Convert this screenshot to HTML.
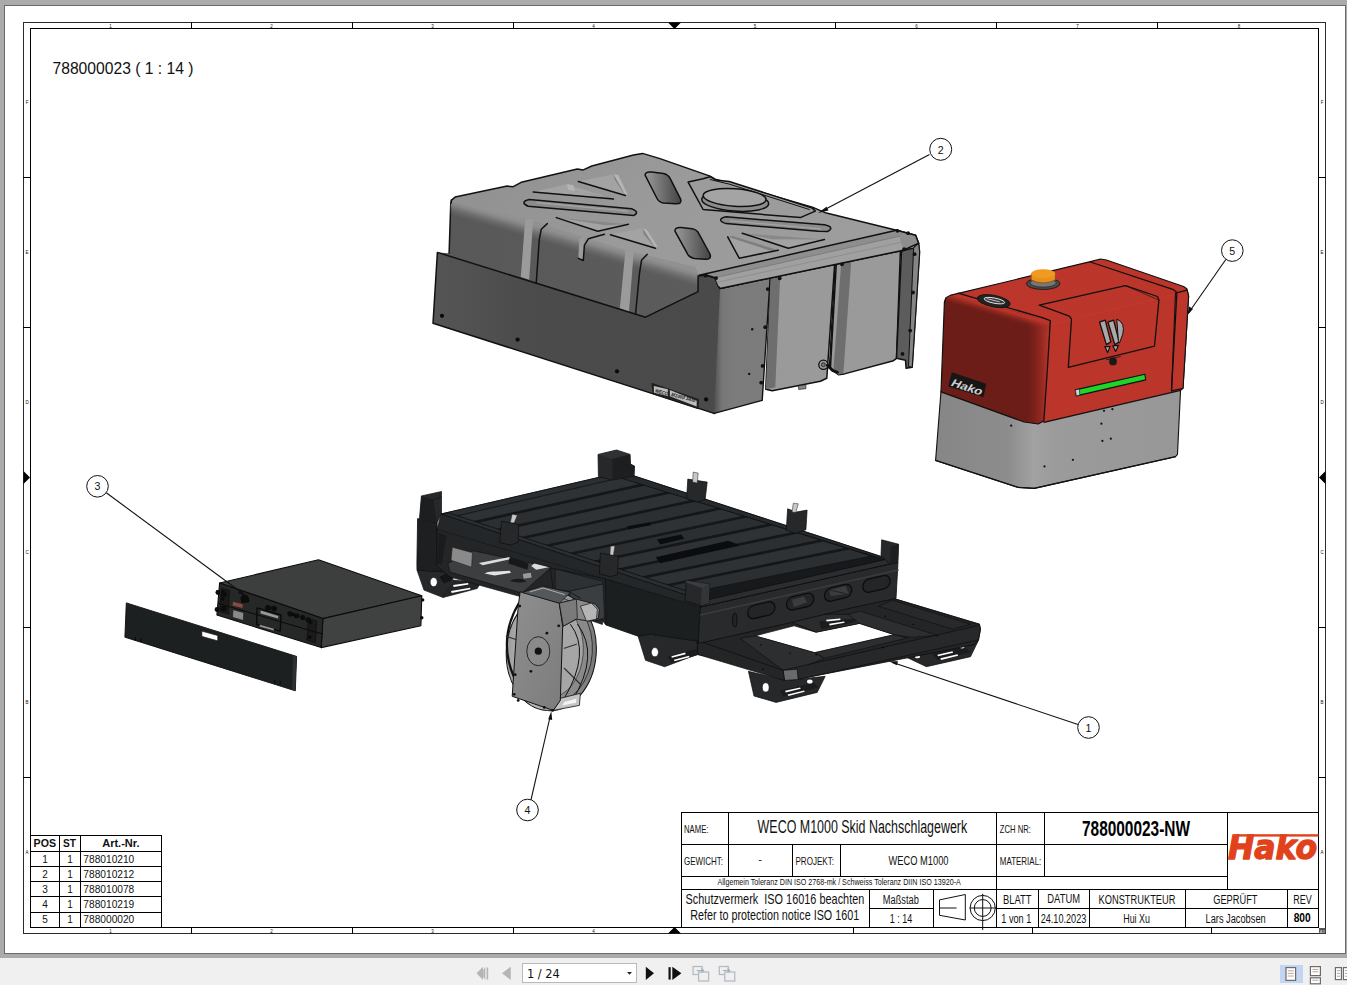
<!DOCTYPE html>
<html lang="de"><head><meta charset="utf-8"><title>788000023-NW</title>
<style>
html,body{margin:0;padding:0;background:#ababab;overflow:hidden}
body{width:1347px;height:985px;position:relative;font-family:"Liberation Sans",sans-serif}
svg{position:absolute;left:0;top:0;display:block}
text{white-space:pre}
</style></head><body>
<svg width="1347" height="985" viewBox="0 0 1347 985">
<rect x="0" y="0" width="1347" height="985" fill="#ababab"/>
<rect x="4.5" y="5.5" width="1341" height="948" fill="#fff" stroke="#6a6a6a" stroke-width="1" shape-rendering="crispEdges"/>
<g shape-rendering="crispEdges">
<rect x="23.5" y="22.5" width="1302" height="911" fill="none" stroke="#2a2a2a" stroke-width="1"/>
<rect x="30.5" y="28.5" width="1288" height="899" fill="none" stroke="#000" stroke-width="1"/>
<line x1="191.5" y1="22" x2="191.5" y2="29" stroke="#000" stroke-width="1" />
<line x1="352.5" y1="22" x2="352.5" y2="29" stroke="#000" stroke-width="1" />
<line x1="513.5" y1="22" x2="513.5" y2="29" stroke="#000" stroke-width="1" />
<line x1="835.5" y1="22" x2="835.5" y2="29" stroke="#000" stroke-width="1" />
<line x1="996.5" y1="22" x2="996.5" y2="29" stroke="#000" stroke-width="1" />
<line x1="1157.5" y1="22" x2="1157.5" y2="29" stroke="#000" stroke-width="1" />
<line x1="191.5" y1="927" x2="191.5" y2="934" stroke="#000" stroke-width="1" />
<line x1="352.5" y1="927" x2="352.5" y2="934" stroke="#000" stroke-width="1" />
<line x1="513.5" y1="927" x2="513.5" y2="934" stroke="#000" stroke-width="1" />
<line x1="853.5" y1="927" x2="853.5" y2="934" stroke="#000" stroke-width="1" />
<line x1="1032.5" y1="927" x2="1032.5" y2="934" stroke="#000" stroke-width="1" />
<line x1="1211.5" y1="927" x2="1211.5" y2="934" stroke="#000" stroke-width="1" />
<line x1="23" y1="177.5" x2="31" y2="177.5" stroke="#000" stroke-width="1" />
<line x1="1318" y1="177.5" x2="1326" y2="177.5" stroke="#000" stroke-width="1" />
<line x1="23" y1="327.5" x2="31" y2="327.5" stroke="#000" stroke-width="1" />
<line x1="1318" y1="327.5" x2="1326" y2="327.5" stroke="#000" stroke-width="1" />
<line x1="23" y1="627.5" x2="31" y2="627.5" stroke="#000" stroke-width="1" />
<line x1="1318" y1="627.5" x2="1326" y2="627.5" stroke="#000" stroke-width="1" />
<line x1="23" y1="777.5" x2="31" y2="777.5" stroke="#000" stroke-width="1" />
<line x1="1318" y1="777.5" x2="1326" y2="777.5" stroke="#000" stroke-width="1" />
</g>
<polygon points="668,22.5 681,22.5 674.5,29" fill="#000"/>
<polygon points="668,933.5 681,933.5 674.5,927" fill="#000"/>
<polygon points="23.5,471 23.5,484 30,477.5" fill="#000"/>
<polygon points="1325.5,471 1325.5,484 1319,477.5" fill="#000"/>
<text x="110.5" y="27.6" font-size="4.5" text-anchor="middle" font-weight="normal" fill="#111" font-family="'Liberation Sans', sans-serif" >1</text>
<text x="271.5" y="27.6" font-size="4.5" text-anchor="middle" font-weight="normal" fill="#111" font-family="'Liberation Sans', sans-serif" >2</text>
<text x="432.5" y="27.6" font-size="4.5" text-anchor="middle" font-weight="normal" fill="#111" font-family="'Liberation Sans', sans-serif" >3</text>
<text x="593.5" y="27.6" font-size="4.5" text-anchor="middle" font-weight="normal" fill="#111" font-family="'Liberation Sans', sans-serif" >4</text>
<text x="755" y="27.6" font-size="4.5" text-anchor="middle" font-weight="normal" fill="#111" font-family="'Liberation Sans', sans-serif" >5</text>
<text x="916.5" y="27.6" font-size="4.5" text-anchor="middle" font-weight="normal" fill="#111" font-family="'Liberation Sans', sans-serif" >6</text>
<text x="1077.5" y="27.6" font-size="4.5" text-anchor="middle" font-weight="normal" fill="#111" font-family="'Liberation Sans', sans-serif" >7</text>
<text x="1239" y="27.6" font-size="4.5" text-anchor="middle" font-weight="normal" fill="#111" font-family="'Liberation Sans', sans-serif" >8</text>
<text x="110.5" y="933.2" font-size="4.5" text-anchor="middle" font-weight="normal" fill="#111" font-family="'Liberation Sans', sans-serif" >1</text>
<text x="271.5" y="933.2" font-size="4.5" text-anchor="middle" font-weight="normal" fill="#111" font-family="'Liberation Sans', sans-serif" >2</text>
<text x="432.5" y="933.2" font-size="4.5" text-anchor="middle" font-weight="normal" fill="#111" font-family="'Liberation Sans', sans-serif" >3</text>
<text x="593.5" y="933.2" font-size="4.5" text-anchor="middle" font-weight="normal" fill="#111" font-family="'Liberation Sans', sans-serif" >4</text>
<text x="27" y="104" font-size="4.5" text-anchor="middle" font-weight="normal" fill="#111" font-family="'Liberation Sans', sans-serif" >F</text>
<text x="1322" y="104" font-size="4.5" text-anchor="middle" font-weight="normal" fill="#111" font-family="'Liberation Sans', sans-serif" >F</text>
<text x="27" y="254" font-size="4.5" text-anchor="middle" font-weight="normal" fill="#111" font-family="'Liberation Sans', sans-serif" >E</text>
<text x="1322" y="254" font-size="4.5" text-anchor="middle" font-weight="normal" fill="#111" font-family="'Liberation Sans', sans-serif" >E</text>
<text x="27" y="404" font-size="4.5" text-anchor="middle" font-weight="normal" fill="#111" font-family="'Liberation Sans', sans-serif" >D</text>
<text x="1322" y="404" font-size="4.5" text-anchor="middle" font-weight="normal" fill="#111" font-family="'Liberation Sans', sans-serif" >D</text>
<text x="27" y="554" font-size="4.5" text-anchor="middle" font-weight="normal" fill="#111" font-family="'Liberation Sans', sans-serif" >C</text>
<text x="1322" y="554" font-size="4.5" text-anchor="middle" font-weight="normal" fill="#111" font-family="'Liberation Sans', sans-serif" >C</text>
<text x="27" y="704" font-size="4.5" text-anchor="middle" font-weight="normal" fill="#111" font-family="'Liberation Sans', sans-serif" >B</text>
<text x="1322" y="704" font-size="4.5" text-anchor="middle" font-weight="normal" fill="#111" font-family="'Liberation Sans', sans-serif" >B</text>
<text x="27" y="854" font-size="4.5" text-anchor="middle" font-weight="normal" fill="#111" font-family="'Liberation Sans', sans-serif" >A</text>
<text x="1322" y="854" font-size="4.5" text-anchor="middle" font-weight="normal" fill="#111" font-family="'Liberation Sans', sans-serif" >A</text>
<rect x="1319" y="928" width="6.5" height="5.5" fill="#555"/>
<text x="1322.2" y="932.6" font-size="4" text-anchor="middle" font-weight="normal" fill="#ddd" font-family="'Liberation Sans', sans-serif" >A3</text>
<text x="52.5" y="74.2" font-size="16" text-anchor="start" font-weight="normal" fill="#111" font-family="'Liberation Sans', sans-serif" textLength="141" lengthAdjust="spacingAndGlyphs" >788000023 ( 1 : 14 )</text>
<g shape-rendering="crispEdges" stroke="#000" stroke-width="1" fill="none">
<rect x="30.5" y="835.5" width="131" height="92"/>
<line x1="30" y1="851.5" x2="162" y2="851.5"/>
<line x1="30" y1="866.5" x2="162" y2="866.5"/>
<line x1="30" y1="881.5" x2="162" y2="881.5"/>
<line x1="30" y1="896.5" x2="162" y2="896.5"/>
<line x1="30" y1="912.5" x2="162" y2="912.5"/>
<line x1="59.5" y1="835" x2="59.5" y2="927"/>
<line x1="80.5" y1="835" x2="80.5" y2="927"/>
</g>
<text x="33.6" y="847.2" font-size="11.5" text-anchor="start" font-weight="bold" fill="#111" font-family="'Liberation Sans', sans-serif" textLength="22.4" lengthAdjust="spacingAndGlyphs" >POS</text>
<text x="63" y="847.2" font-size="11.5" text-anchor="start" font-weight="bold" fill="#111" font-family="'Liberation Sans', sans-serif" textLength="13" lengthAdjust="spacingAndGlyphs" >ST</text>
<text x="102.2" y="847.2" font-size="11.5" text-anchor="start" font-weight="bold" fill="#111" font-family="'Liberation Sans', sans-serif" textLength="37.4" lengthAdjust="spacingAndGlyphs" >Art.-Nr.</text>
<text x="45" y="863" font-size="10" text-anchor="middle" font-weight="normal" fill="#111" font-family="'Liberation Sans', sans-serif" >1</text>
<text x="70" y="863" font-size="10" text-anchor="middle" font-weight="normal" fill="#111" font-family="'Liberation Sans', sans-serif" >1</text>
<text x="83.3" y="863" font-size="10" text-anchor="start" font-weight="normal" fill="#111" font-family="'Liberation Sans', sans-serif" textLength="51" lengthAdjust="spacingAndGlyphs" >788010210</text>
<text x="45" y="878" font-size="10" text-anchor="middle" font-weight="normal" fill="#111" font-family="'Liberation Sans', sans-serif" >2</text>
<text x="70" y="878" font-size="10" text-anchor="middle" font-weight="normal" fill="#111" font-family="'Liberation Sans', sans-serif" >1</text>
<text x="83.3" y="878" font-size="10" text-anchor="start" font-weight="normal" fill="#111" font-family="'Liberation Sans', sans-serif" textLength="51" lengthAdjust="spacingAndGlyphs" >788010212</text>
<text x="45" y="893" font-size="10" text-anchor="middle" font-weight="normal" fill="#111" font-family="'Liberation Sans', sans-serif" >3</text>
<text x="70" y="893" font-size="10" text-anchor="middle" font-weight="normal" fill="#111" font-family="'Liberation Sans', sans-serif" >1</text>
<text x="83.3" y="893" font-size="10" text-anchor="start" font-weight="normal" fill="#111" font-family="'Liberation Sans', sans-serif" textLength="51" lengthAdjust="spacingAndGlyphs" >788010078</text>
<text x="45" y="908.2" font-size="10" text-anchor="middle" font-weight="normal" fill="#111" font-family="'Liberation Sans', sans-serif" >4</text>
<text x="70" y="908.2" font-size="10" text-anchor="middle" font-weight="normal" fill="#111" font-family="'Liberation Sans', sans-serif" >1</text>
<text x="83.3" y="908.2" font-size="10" text-anchor="start" font-weight="normal" fill="#111" font-family="'Liberation Sans', sans-serif" textLength="51" lengthAdjust="spacingAndGlyphs" >788010219</text>
<text x="45" y="923.2" font-size="10" text-anchor="middle" font-weight="normal" fill="#111" font-family="'Liberation Sans', sans-serif" >5</text>
<text x="70" y="923.2" font-size="10" text-anchor="middle" font-weight="normal" fill="#111" font-family="'Liberation Sans', sans-serif" >1</text>
<text x="83.3" y="923.2" font-size="10" text-anchor="start" font-weight="normal" fill="#111" font-family="'Liberation Sans', sans-serif" textLength="51" lengthAdjust="spacingAndGlyphs" >788000020</text>
<g shape-rendering="crispEdges" stroke="#000" stroke-width="1" fill="none">
<rect x="681.5" y="812.5" width="637" height="115" fill="#fff"/>
<line x1="681" y1="844.5" x2="1227" y2="844.5"/>
<line x1="681" y1="876.5" x2="1227" y2="876.5"/>
<line x1="681" y1="889.5" x2="1319" y2="889.5"/>
<line x1="728.5" y1="812" x2="728.5" y2="877"/>
<line x1="792.5" y1="844" x2="792.5" y2="877"/>
<line x1="840.5" y1="844" x2="840.5" y2="877"/>
<line x1="996.5" y1="812" x2="996.5" y2="927"/>
<line x1="1044.5" y1="812" x2="1044.5" y2="877"/>
<line x1="1227.5" y1="812" x2="1227.5" y2="890"/>
<line x1="869.5" y1="889" x2="869.5" y2="927"/>
<line x1="933.5" y1="889" x2="933.5" y2="927"/>
<line x1="869" y1="908.5" x2="934" y2="908.5"/>
<line x1="996" y1="908.5" x2="1319" y2="908.5"/>
<line x1="1038.5" y1="889" x2="1038.5" y2="927"/>
<line x1="1089.5" y1="889" x2="1089.5" y2="927"/>
<line x1="1185.5" y1="889" x2="1185.5" y2="927"/>
<line x1="1287.5" y1="889" x2="1287.5" y2="927"/>
</g>
<text x="684" y="832.6" font-size="11" text-anchor="start" font-weight="normal" fill="#111" font-family="'Liberation Sans', sans-serif" textLength="24.5" lengthAdjust="spacingAndGlyphs" >NAME:</text>
<text x="684" y="864.7" font-size="11" text-anchor="start" font-weight="normal" fill="#111" font-family="'Liberation Sans', sans-serif" textLength="39" lengthAdjust="spacingAndGlyphs" >GEWICHT:</text>
<text x="760" y="863" font-size="11" text-anchor="middle" font-weight="normal" fill="#111" font-family="'Liberation Sans', sans-serif" >-</text>
<text x="795.5" y="864.7" font-size="11" text-anchor="start" font-weight="normal" fill="#111" font-family="'Liberation Sans', sans-serif" textLength="38.5" lengthAdjust="spacingAndGlyphs" >PROJEKT:</text>
<text x="999.8" y="832.6" font-size="11" text-anchor="start" font-weight="normal" fill="#111" font-family="'Liberation Sans', sans-serif" textLength="31" lengthAdjust="spacingAndGlyphs" >ZCH NR:</text>
<text x="999.8" y="864.7" font-size="11" text-anchor="start" font-weight="normal" fill="#111" font-family="'Liberation Sans', sans-serif" textLength="41.5" lengthAdjust="spacingAndGlyphs" >MATERIAL:</text>
<text x="757.6" y="832.6" font-size="17.5" text-anchor="start" font-weight="normal" fill="#111" font-family="'Liberation Sans', sans-serif" textLength="209.6" lengthAdjust="spacingAndGlyphs" >WECO M1000 Skid Nachschlagewerk</text>
<text x="888.5" y="864.7" font-size="12.7" text-anchor="start" font-weight="normal" fill="#111" font-family="'Liberation Sans', sans-serif" textLength="60" lengthAdjust="spacingAndGlyphs" >WECO M1000</text>
<text x="717.5" y="885" font-size="8.6" text-anchor="start" font-weight="normal" fill="#111" font-family="'Liberation Sans', sans-serif" textLength="243.3" lengthAdjust="spacingAndGlyphs" >Allgemein Toleranz DIN ISO 2768-mk / Schweiss Toleranz DIIN ISO 13920-A</text>
<text x="685.6" y="903.5" font-size="14.3" text-anchor="start" font-weight="normal" fill="#111" font-family="'Liberation Sans', sans-serif" textLength="178.7" lengthAdjust="spacingAndGlyphs" >Schutzvermerk  ISO 16016 beachten</text>
<text x="690.2" y="920.2" font-size="14.3" text-anchor="start" font-weight="normal" fill="#111" font-family="'Liberation Sans', sans-serif" textLength="169" lengthAdjust="spacingAndGlyphs" >Refer to protection notice ISO 1601</text>
<text x="882.8" y="903.5" font-size="12.5" text-anchor="start" font-weight="normal" fill="#111" font-family="'Liberation Sans', sans-serif" textLength="36" lengthAdjust="spacingAndGlyphs" >Maßstab</text>
<text x="889.8" y="922.7" font-size="12.5" text-anchor="start" font-weight="normal" fill="#111" font-family="'Liberation Sans', sans-serif" textLength="22.4" lengthAdjust="spacingAndGlyphs" >1 : 14</text>
<text x="1082" y="835.7" font-size="22" text-anchor="start" font-weight="bold" fill="#000" font-family="'Liberation Sans', sans-serif" textLength="108" lengthAdjust="spacingAndGlyphs" >788000023-NW</text>
<text x="1003" y="903.5" font-size="12.5" text-anchor="start" font-weight="normal" fill="#111" font-family="'Liberation Sans', sans-serif" textLength="28.5" lengthAdjust="spacingAndGlyphs" >BLATT</text>
<text x="1001.3" y="922.7" font-size="12.5" text-anchor="start" font-weight="normal" fill="#111" font-family="'Liberation Sans', sans-serif" textLength="30" lengthAdjust="spacingAndGlyphs" >1 von 1</text>
<text x="1047.3" y="902.8" font-size="12.5" text-anchor="start" font-weight="normal" fill="#111" font-family="'Liberation Sans', sans-serif" textLength="32.7" lengthAdjust="spacingAndGlyphs" >DATUM</text>
<text x="1040.7" y="922.7" font-size="12.5" text-anchor="start" font-weight="normal" fill="#111" font-family="'Liberation Sans', sans-serif" textLength="45.6" lengthAdjust="spacingAndGlyphs" >24.10.2023</text>
<text x="1098.5" y="903.5" font-size="12.5" text-anchor="start" font-weight="normal" fill="#111" font-family="'Liberation Sans', sans-serif" textLength="77" lengthAdjust="spacingAndGlyphs" >KONSTRUKTEUR</text>
<text x="1123.2" y="922.7" font-size="12.5" text-anchor="start" font-weight="normal" fill="#111" font-family="'Liberation Sans', sans-serif" textLength="26.8" lengthAdjust="spacingAndGlyphs" >Hui Xu</text>
<text x="1213.2" y="903.5" font-size="12.5" text-anchor="start" font-weight="normal" fill="#111" font-family="'Liberation Sans', sans-serif" textLength="44.3" lengthAdjust="spacingAndGlyphs" >GEPRÜFT</text>
<text x="1205.5" y="922.7" font-size="12.5" text-anchor="start" font-weight="normal" fill="#111" font-family="'Liberation Sans', sans-serif" textLength="60.2" lengthAdjust="spacingAndGlyphs" >Lars Jacobsen</text>
<text x="1293.2" y="903.5" font-size="12.5" text-anchor="start" font-weight="normal" fill="#111" font-family="'Liberation Sans', sans-serif" textLength="18.5" lengthAdjust="spacingAndGlyphs" >REV</text>
<text x="1293.7" y="922.3" font-size="12.5" text-anchor="start" font-weight="bold" fill="#000" font-family="'Liberation Sans', sans-serif" textLength="17" lengthAdjust="spacingAndGlyphs" >800</text>
<g fill="none" stroke="#111" stroke-width="1">
<polygon points="939.5,899.9 965.3,894.5 965.3,920 939.5,915.3"/>
<line x1="939.5" y1="908" x2="956.6" y2="908"/>
<circle cx="982.7" cy="908" r="12.6"/><circle cx="982.7" cy="908" r="8.4"/>
<line x1="982.7" y1="893.8" x2="982.7" y2="930"/><line x1="969.7" y1="908" x2="996.8" y2="908"/>
</g>
<defs><clipPath id="logoClip"><rect x="1226" y="834.2" width="94" height="30"/></clipPath></defs>
<g fill="#e2421b">
<rect x="1236" y="834.2" width="82.5" height="2.4"/>
</g>
<text x="1228" y="859.3" font-size="33" text-anchor="start" font-weight="bold" fill="#e2421b" font-family="'DejaVu Sans', sans-serif" textLength="89" lengthAdjust="spacingAndGlyphs" font-style="italic" stroke="#e2421b" stroke-width="1.3" stroke-linejoin="round" clip-path="url(#logoClip)">Hako</text>
<defs>
<linearGradient id="gFront" x1="0" y1="0" x2="1" y2="0"><stop offset="0" stop-color="#585858"/><stop offset="1" stop-color="#5c5c5c"/></linearGradient>
<linearGradient id="gPlate" x1="0" y1="0" x2="1" y2="0"><stop offset="0" stop-color="#555"/><stop offset="0.35" stop-color="#4b4b4b"/><stop offset="1" stop-color="#4a4a4a"/></linearGradient>
<linearGradient id="gSide" x1="0" y1="0" x2="1" y2="0"><stop offset="0" stop-color="#505050"/><stop offset="0.14" stop-color="#777"/><stop offset="0.3" stop-color="#7b7b7b"/><stop offset="1" stop-color="#7c7c7c"/></linearGradient>
<linearGradient id="gHole" x1="0" y1="0" x2="1" y2="0"><stop offset="0" stop-color="#9a9a9a"/><stop offset="0.55" stop-color="#6a6a6a"/><stop offset="1" stop-color="#444"/></linearGradient>
<linearGradient id="gTop" x1="0" y1="0" x2="1" y2="0.3"><stop offset="0" stop-color="#8f8f8f"/><stop offset="0.5" stop-color="#9a9a9a"/><stop offset="1" stop-color="#9d9d9d"/></linearGradient>
<linearGradient id="gFrontTop" gradientUnits="userSpaceOnUse" x1="452" y1="201" x2="448.1" y2="214.4"><stop offset="0" stop-color="#919191" stop-opacity="1"/><stop offset="0.25" stop-color="#8a8a8a" stop-opacity="0.9"/><stop offset="1" stop-color="#707070" stop-opacity="0"/></linearGradient>
</defs>
<g id="tank">
<polygon points="450.7,205.1 451.5,200.1 455.1,197.1 507.2,186.1 513.2,186.7 521.2,182.3 577.3,169.1 583.3,169.9 591.8,166.0 633.5,155.0 642.5,153.4 660.0,158.6 710.1,176.1 715.1,179.1 812.3,207.1 826.4,213.1 896.5,230.2 915.6,235.2 918.6,243.2 720.1,289.3 698.1,277.3 645.5,257.2 452.1,207.1" fill="url(#gTop)" stroke="#111" stroke-width="1.5" stroke-linejoin="round" />
<polygon points="450.7,205.1 453.1,202.1 525.2,219.6 625.4,250.8 695.0,267.7 698.1,275.7 698.1,297.3 645.5,317.2 437.4,252.4 449.1,253.2" fill="url(#gFront)" stroke="none" stroke-width="0" stroke-linejoin="round" />
<polyline points="451.5,200.1 450.7,205.1 449.1,253.2" fill="none" stroke="#111" stroke-width="1.5" stroke-linejoin="round" stroke-linecap="round" />
<polygon points="450.7,204.7 453.1,201.3 525.2,218.8 625.4,250.0 695.0,266.9 698.1,274.9 698.1,297.3 645.5,317.2 437.4,252.4 449.1,253.2" fill="url(#gFrontTop)" stroke="none" stroke-width="0" stroke-linejoin="round" />
<polygon points="525.2,219.6 533.2,218.8 529.2,279.7 520.8,276.9" fill="#9b9b9b" stroke="none" stroke-width="0" stroke-linejoin="round" />
<polygon points="625.4,250.8 633.9,250.0 629.0,311.8 619.8,308.6" fill="#9b9b9b" stroke="none" stroke-width="0" stroke-linejoin="round" />
<polygon points="579.3,239.2 585.4,235.6 583.3,260.5 578.3,258.4" fill="#9b9b9b" stroke="none" stroke-width="0" stroke-linejoin="round" />
<polyline points="547.3,223.6 541.3,229.2 539.3,239.2 536.2,283.3" fill="none" stroke="#111" stroke-width="1.5" stroke-linejoin="round" stroke-linecap="round" />
<polyline points="647.1,254.4 641.5,260.3 639.5,273.3 635.5,314.4" fill="none" stroke="#111" stroke-width="1.5" stroke-linejoin="round" stroke-linecap="round" />
<polyline points="604.4,234.2 588.4,238.8 584.4,245.2 583.3,260.5 578.3,258.4" fill="none" stroke="#111" stroke-width="1.5" stroke-linejoin="round" stroke-linecap="round" />
<path d="M529.2,199.5 L631.5,208.7 Q640.5,212.1 633.5,215.6 L528.2,206.3 Q519.2,202.1 529.2,199.5Z" fill="#8b8b8b" stroke="#111" stroke-width="1.5"/>
<polyline points="537.2,202.7 627.4,211.1" fill="none" stroke="#a5a5a5" stroke-width="1.2" stroke-linejoin="round" stroke-linecap="round" />
<polygon points="533.2,192.1 566.9,184.3 613.4,199.1" fill="#a3a3a3" stroke="none" stroke-width="0" stroke-linejoin="round" />
<polygon points="566.9,184.3 573.3,185.1 575.3,191.5 568.3,190.1" fill="#b4b4b4" stroke="none" stroke-width="0" stroke-linejoin="round" />
<polygon points="568.3,190.1 575.3,191.5 611.4,197.9 613.4,199.1" fill="#7e7e7e" stroke="none" stroke-width="0" stroke-linejoin="round" />
<polyline points="533.2,192.1 613.4,199.1" fill="none" stroke="#111" stroke-width="1.5" stroke-linejoin="round" stroke-linecap="round" />
<polygon points="578.3,181.5 613.4,174.3 625.4,195.5" fill="#a3a3a3" stroke="none" stroke-width="0" stroke-linejoin="round" />
<polygon points="613.4,174.3 618.4,175.1 627.4,194.1 625.4,195.5" fill="#b4b4b4" stroke="none" stroke-width="0" stroke-linejoin="round" />
<polygon points="613.4,174.3 615.0,180.1 625.4,195.5" fill="#7e7e7e" stroke="none" stroke-width="0" stroke-linejoin="round" />
<polyline points="578.3,181.5 625.4,195.5" fill="none" stroke="#111" stroke-width="1.5" stroke-linejoin="round" stroke-linecap="round" />
<polygon points="556.3,217.6 628.4,224.2 597.8,231.2" fill="#a3a3a3" stroke="none" stroke-width="0" stroke-linejoin="round" />
<polygon points="556.3,217.6 628.4,224.2 605.4,225.2" fill="#888" stroke="none" stroke-width="0" stroke-linejoin="round" />
<polyline points="556.3,217.6 597.8,231.2 628.4,224.2" fill="none" stroke="#111" stroke-width="1.5" stroke-linejoin="round" stroke-linecap="round" />
<polygon points="610.4,234.8 642.5,228.2 655.5,248.2" fill="#a3a3a3" stroke="none" stroke-width="0" stroke-linejoin="round" />
<polygon points="642.5,228.2 646.5,229.6 657.5,246.2 655.5,248.2" fill="#b4b4b4" stroke="none" stroke-width="0" stroke-linejoin="round" />
<polygon points="642.5,228.2 643.9,234.2 655.5,248.2" fill="#7e7e7e" stroke="none" stroke-width="0" stroke-linejoin="round" />
<polyline points="610.4,234.8 655.5,248.2" fill="none" stroke="#111" stroke-width="1.5" stroke-linejoin="round" stroke-linecap="round" />
<path d="M645.1,175.1 Q645.5,171.5 651.5,172.1 L663.5,173.5 Q668.5,174.7 670.5,179.1 L680.6,199.1 Q682.6,204.1 675.6,203.7 L663.5,203.1 Q658.5,202.1 656.5,197.5Z" fill="url(#gHole)" stroke="#111" stroke-width="1.5"/>
<path d="M675.0,231.2 Q674.4,227.2 681.0,227.6 L692.1,228.8 Q697.1,229.6 699.1,234.2 L710.1,254.2 Q711.7,259.7 705.1,259.3 L694.1,258.4 Q689.1,257.6 687.1,253.2Z" fill="url(#gHole)" stroke="#111" stroke-width="1.5"/>
<polygon points="688.1,182.1 703.1,178.7 710.1,176.7 716.1,180.1 729.2,181.5 812.3,208.1 815.3,211.1 800.3,217.6 703.1,209.5" fill="#9c9c9c" stroke="#111" stroke-width="1.5" stroke-linejoin="round" />
<polyline points="710.1,179.5 729.2,184.1 809.3,209.5" fill="none" stroke="#111" stroke-width="1.0" stroke-linejoin="round" stroke-linecap="round" />
<ellipse cx="735.2" cy="201.5" rx="33.5" ry="9.6" fill="#8c8c8c" stroke="#111" stroke-width="1.5" transform="rotate(4 735.2 201.5)"/>
<ellipse cx="734.6" cy="197.5" rx="31.5" ry="8.8" fill="#a4a4a4" stroke="#111" stroke-width="1.5" transform="rotate(4 734.6 197.5)"/>
<path d="M726.1,216.8 L824.4,224.8 Q835.4,227.2 827.4,231.6 L818.3,231.2 L726.1,223.6 Q715.1,219.6 726.1,216.8Z" fill="#8b8b8b" stroke="#111" stroke-width="1.5"/>
<polyline points="730.2,220.8 820.4,228.8" fill="none" stroke="#a5a5a5" stroke-width="1.2" stroke-linejoin="round" stroke-linecap="round" />
<polygon points="742.2,233.2 824.4,239.6 788.3,248.2" fill="#a3a3a3" stroke="none" stroke-width="0" stroke-linejoin="round" />
<polygon points="742.2,233.2 824.4,239.6 772.2,239.2" fill="#888" stroke="none" stroke-width="0" stroke-linejoin="round" />
<polyline points="742.2,233.2 788.3,248.2 824.4,239.6" fill="none" stroke="#111" stroke-width="1.5" stroke-linejoin="round" stroke-linecap="round" />
<polygon points="727.7,236.8 778.3,250.2 739.2,258.2" fill="#a3a3a3" stroke="none" stroke-width="0" stroke-linejoin="round" />
<polygon points="727.7,236.8 733.2,236.2 778.3,250.2 772.2,251.2" fill="#7e7e7e" stroke="none" stroke-width="0" stroke-linejoin="round" />
<polyline points="727.7,236.8 739.2,258.2 778.3,250.2" fill="none" stroke="#111" stroke-width="1.5" stroke-linejoin="round" stroke-linecap="round" />
<polyline points="719.9,288.9 714.1,412.8" fill="none" stroke="#4e4e4e" stroke-width="3" stroke-linejoin="round" stroke-linecap="round" />
<polygon points="437.4,252.4 645.5,317.2 698.1,291.7 698.1,276.1 706.1,275.3 715.1,278.1 718.1,286.1 720.1,288.5 714.1,413.4 433.0,323.2" fill="url(#gPlate)" stroke="none" stroke-width="0" stroke-linejoin="round" />
<polyline points="720.1,288.5 718.1,286.1 715.1,278.1 706.1,275.3 698.1,276.1 698.1,291.7 645.5,317.2 437.4,252.4 433.0,323.2 714.1,413.4" fill="none" stroke="#111" stroke-width="1.5" stroke-linejoin="round" stroke-linecap="round" />
<polygon points="720.1,288.5 770.2,277.1 762.2,400.4 714.1,413.4" fill="url(#gSide)" stroke="none" stroke-width="0" stroke-linejoin="round" />
<polyline points="720.1,288.5 770.2,277.1 762.2,400.4 714.1,413.4" fill="none" stroke="#111" stroke-width="1.4" stroke-linejoin="round" stroke-linecap="round" />
<polygon points="770.6,275.1 780.3,273.1 834.8,262.0 826.8,378.3 820.4,381.3 772.2,390.7 765.8,389.3" fill="#9a9a9a" stroke="#111" stroke-width="1.5" stroke-linejoin="round" />
<polygon points="770.6,275.1 780.3,273.1 775.3,387.3 765.8,389.3" fill="#6e6e6e" stroke="none" stroke-width="0" stroke-linejoin="round" />
<polygon points="836.4,261.6 841.4,260.0 900.5,247.6 896.5,358.3 893.5,360.7 844.4,373.9 838.4,374.7 830.4,368.3" fill="#9a9a9a" stroke="#111" stroke-width="1.5" stroke-linejoin="round" />
<polygon points="841.4,260.0 851.4,258.4 843.4,373.3 838.4,374.7 833.4,370.3" fill="#6e6e6e" stroke="none" stroke-width="0" stroke-linejoin="round" />
<polyline points="835.2,264.1 829.4,368.3" fill="none" stroke="#111" stroke-width="1.5" stroke-linejoin="round" stroke-linecap="round" />
<polygon points="901.5,251.0 913.6,248.0 918.6,243.0 919.6,252.0 912.2,367.3 906.1,368.3 905.5,360.3 896.5,358.3" fill="#5c5c5c" stroke="#111" stroke-width="1.5" stroke-linejoin="round" />
<polygon points="913.6,248.0 918.6,243.0 919.6,252.0 912.2,367.3 908.5,366.3" fill="#858585" stroke="#111" stroke-width="1.0" stroke-linejoin="round" />
<polygon points="699.1,275.3 896.5,230.2 915.6,235.2 918.6,243.2 903.5,250.2 721.1,288.3 718.1,285.3 715.1,277.7 706.1,274.9" fill="#8e8e8e" stroke="#111" stroke-width="1.5" stroke-linejoin="round" />
<polygon points="715.1,277.7 899.5,236.2 903.5,250.2 721.1,288.3 718.1,285.3" fill="#a0a0a0" stroke="none" stroke-width="0" stroke-linejoin="round" />
<polyline points="715.1,277.7 899.5,236.2" fill="none" stroke="#777" stroke-width="0.8" stroke-linejoin="round" stroke-linecap="round" />
<polyline points="717.1,282.3 901.5,242.2" fill="none" stroke="#8a8a8a" stroke-width="0.8" stroke-linejoin="round" stroke-linecap="round" />
<polyline points="721.1,288.3 903.5,250.2" fill="none" stroke="#111" stroke-width="1.5" stroke-linejoin="round" stroke-linecap="round" />
<circle cx="705.7" cy="275.7" r="1.9" fill="#111"/>
<circle cx="716.1" cy="278.1" r="1.9" fill="#111"/>
<circle cx="779.7" cy="278.3" r="1.9" fill="#111"/>
<circle cx="842.0" cy="264.3" r="1.9" fill="#111"/>
<circle cx="897.5" cy="230.8" r="1.9" fill="#111"/>
<circle cx="908.1" cy="233.2" r="1.9" fill="#111"/>
<circle cx="904.1" cy="249.2" r="1.9" fill="#111"/>
<circle cx="914.6" cy="254.2" r="1.9" fill="#111"/>
<circle cx="767.8" cy="289.1" r="1.9" fill="#111"/>
<circle cx="765.2" cy="327.2" r="1.9" fill="#111"/>
<circle cx="762.6" cy="365.9" r="1.9" fill="#111"/>
<circle cx="761.2" cy="382.7" r="1.9" fill="#111"/>
<circle cx="913.0" cy="292.5" r="1.9" fill="#111"/>
<circle cx="910.2" cy="330.6" r="1.9" fill="#111"/>
<circle cx="902.5" cy="353.9" r="1.9" fill="#111"/>
<circle cx="752.2" cy="329.2" r="1.2" fill="#111"/>
<circle cx="749.2" cy="373.9" r="1.2" fill="#111"/>
<circle cx="442.0" cy="315.8" r="2.1" fill="#0a0a0a"/>
<circle cx="517.6" cy="339.6" r="2.1" fill="#0a0a0a"/>
<circle cx="617.0" cy="371.3" r="2.1" fill="#0a0a0a"/>
<circle cx="706.1" cy="399.4" r="2.1" fill="#0a0a0a"/>
<polygon points="651.9,383.3 698.5,399.4 698.1,408.8 653.1,393.9" fill="#222" stroke="#111" stroke-width="0.6" stroke-linejoin="round" />
<polygon points="653.9,385.9 667.9,389.3 667.9,395.9 653.9,392.7" fill="#bdbdbd" stroke="none" stroke-width="0" stroke-linejoin="round" />
<polygon points="669.9,389.9 696.7,400.8 696.7,406.4 669.9,396.3" fill="#bdbdbd" stroke="none" stroke-width="0" stroke-linejoin="round" />
<text transform="translate(654.7,392.3) rotate(14) skewX(-5)" font-size="5.2" font-weight="bold" font-family="'Liberation Sans',sans-serif" fill="#222" textLength="13" lengthAdjust="spacingAndGlyphs">WECO</text>
<text transform="translate(670.7,396.1) rotate(14) skewX(-5)" font-size="5.2" font-weight="bold" font-style="italic" font-family="'Liberation Sans',sans-serif" fill="#222" textLength="25" lengthAdjust="spacingAndGlyphs">M1000 Skid</text>
<circle cx="823.4" cy="364.7" r="4.6" fill="#9a9a9a" stroke="#111" stroke-width="1.3"/><circle cx="823.4" cy="364.7" r="2" fill="#777" stroke="#111" stroke-width="0.7"/>
<polyline points="827.4,365.3 832.4,370.3 837.4,372.3" fill="none" stroke="#111" stroke-width="3" stroke-linejoin="round" stroke-linecap="round" />
<polygon points="798.3,385.9 805.9,384.7 805.9,388.7 798.7,389.5" fill="#888" stroke="#111" stroke-width="0.6" stroke-linejoin="round" />
</g>
<circle cx="940.7" cy="149.3" r="11" fill="#fff" stroke="#111" stroke-width="1"/>
<text x="940.7" y="153.5" font-size="10.6" text-anchor="middle" font-weight="normal" fill="#111" font-family="'Liberation Sans', sans-serif" >2</text>
<line x1="929.5" y1="154.5" x2="822" y2="211" stroke="#111" stroke-width="1.1" />
<polygon points="818,213 826.5,206.8 828.5,210.6" fill="#111"/>
<defs>
<linearGradient id="rLeft" gradientUnits="userSpaceOnUse" x1="996.1" y1="305.1" x2="993.0" y2="315.7"><stop offset="0" stop-color="#bb352a" stop-opacity="1"/><stop offset="0.3" stop-color="#b83429" stop-opacity="1"/><stop offset="1" stop-color="#8a251e" stop-opacity="0"/></linearGradient><linearGradient id="rLeftR" gradientUnits="userSpaceOnUse" x1="1027" y1="0" x2="1049" y2="0"><stop offset="0" stop-color="#8a251e" stop-opacity="0"/><stop offset="1" stop-color="#bb352a" stop-opacity="1"/></linearGradient>
<linearGradient id="rTop" x1="0" y1="0" x2="1" y2="0"><stop offset="0" stop-color="#bd362b"/><stop offset="1" stop-color="#bb352a"/></linearGradient>
<linearGradient id="gBase" x1="0" y1="0" x2="1" y2="0"><stop offset="0" stop-color="#868686"/><stop offset="0.30" stop-color="#8d8d8d"/><stop offset="0.40" stop-color="#a2a2a2"/><stop offset="0.48" stop-color="#9b9b9b"/><stop offset="1" stop-color="#979797"/></linearGradient>
</defs>
<g id="redbox">
<polygon points="941.0,391.2 1024.2,420.3 1042.2,421.5 1180.6,389.2 1177.5,454.3 1175.5,456.7 1034.2,488.4 1018.2,487.4 935.6,460.4" fill="url(#gBase)" stroke="#111" stroke-width="1.1" stroke-linejoin="round" />
<polyline points="935.6,460.4 1018.2,487.4 1034.2,488.4 1175.5,456.7" fill="none" stroke="#111" stroke-width="1.2" stroke-linejoin="round" stroke-linecap="round" />
<polygon points="944.4,302.5 946.0,297.7 951.0,295.1 1090.4,261.6 1100.4,259.0 1106.4,260.0 1183.6,286.5 1187.0,289.1 1187.6,293.1 1050.3,324.6 949.0,300.1" fill="url(#rTop)" stroke="#111" stroke-width="1.2" stroke-linejoin="round" />
<polygon points="944.4,302.5 946.0,298.1 951.0,295.7 1050.3,320.6 1049.9,329.2 1043.9,420.8 1038.2,424.0 1024.2,422.0 941.0,391.9" fill="#6d1d17" stroke="none" stroke-width="0" stroke-linejoin="round" />
<polygon points="944.4,302.5 946.0,298.1 951.0,295.7 1050.3,320.6 1049.9,329.2 1043.9,420.8 1038.2,424.0 1024.2,422.0 941.0,391.9" fill="url(#rLeftR)" stroke="none" stroke-width="0" stroke-linejoin="round" />
<polygon points="944.4,302.5 946.0,298.1 951.0,295.7 1050.3,320.6 1049.9,329.2 1043.9,420.8 1038.2,424.0 1024.2,422.0 941.0,391.9" fill="url(#rLeft)" stroke="none" stroke-width="0" stroke-linejoin="round" />
<polyline points="946.0,298.1 944.4,302.5 941.0,391.9 1024.2,422.0 1038.2,424.0 1043.9,420.8" fill="none" stroke="#111" stroke-width="1.2" stroke-linejoin="round" stroke-linecap="round" />
<polygon points="1049.9,323.8 1187.2,290.7 1188.6,296.1 1183.0,388.3 1180.6,390.3 1043.9,422.4 1045.3,390.3" fill="#bb352a" stroke="none" stroke-width="0" stroke-linejoin="round" />
<polyline points="1187.2,290.7 1188.6,296.1 1183.0,388.3 1180.6,390.3 1043.9,422.4" fill="none" stroke="#111" stroke-width="1.2" stroke-linejoin="round" stroke-linecap="round" />
<polyline points="1051.3,324.2 1186.6,291.7" fill="none" stroke="#c0372c" stroke-width="2" stroke-linejoin="round" stroke-linecap="round" />
<polygon points="1175.5,293.1 1187.2,290.1 1188.6,296.1 1183.0,388.3 1171.5,390.9" fill="#bd362b" stroke="#111" stroke-width="1.1" stroke-linejoin="round" />
<polyline points="958.1,293.1 1042.2,317.7 1050.3,320.6 1047.3,370.3 1043.9,420.4" fill="none" stroke="#111" stroke-width="1.3" stroke-linejoin="round" stroke-linecap="round" />
<polyline points="1090.4,262.0 1173.5,289.7 1176.9,292.5 1171.5,390.9" fill="none" stroke="#111" stroke-width="1.3" stroke-linejoin="round" stroke-linecap="round" />
<polyline points="1039.2,305.1 1125.4,285.7 1157.5,296.5 1158.9,300.1 1154.5,346.2 1068.3,367.3 1071.5,319.2 1069.3,316.1 1039.2,305.1" fill="none" stroke="#111" stroke-width="1.3" stroke-linejoin="round" stroke-linecap="round" />
<polyline points="1125.4,285.7 1158.9,300.1" fill="none" stroke="#111" stroke-width="0.6" stroke-linejoin="round" stroke-linecap="round" />
<polygon points="1099.6,322.2 1105.2,320.2 1110.8,341.8 1106.4,344.6" fill="#a9a9a9" stroke="#111" stroke-width="1.3" stroke-linejoin="round" />
<polygon points="1108.0185207456402,322.2 1113.6185207456404,320.2 1119.2185207456403,341.8 1114.8185207456404,344.6" fill="#a9a9a9" stroke="#111" stroke-width="1.3" stroke-linejoin="round" />
<path d="M1116.8,319.2 Q1125.4,322.2 1122.8,334.2 L1119.4,343.2 L1118.4,341.2Z" fill="#a9a9a9" stroke="#111" stroke-width="1"/>
<polygon points="1104.8,346.6 1110.0,346.6 1107.6,352.6" fill="#a9a9a9" stroke="#111" stroke-width="1.2" stroke-linejoin="round" />
<polygon points="1112.8,345.8 1118.4,345.4 1115.6,351.4" fill="#a9a9a9" stroke="#111" stroke-width="1.2" stroke-linejoin="round" />
<circle cx="1113.0" cy="361.4" r="3.9" fill="#1a1a1a"/>
<polyline points="1106.4,359.8 1120.4,356.6" fill="none" stroke="#111" stroke-width="0.7" stroke-linejoin="round" stroke-linecap="round" />
<polygon points="1075.3,389.9 1144.9,374.3 1145.7,379.9 1076.3,395.9" fill="#1fd628" stroke="#111" stroke-width="1.1" stroke-linejoin="round" />
<polygon points="1075.3,389.9 1079.3,389.1 1079.9,394.9 1076.3,395.9" fill="#d0d0d0" stroke="#111" stroke-width="0.6" stroke-linejoin="round" />
<polygon points="952.0,372.7 985.7,383.9 983.3,396.7 948.6,386.3" fill="#161616" stroke="#111" stroke-width="0.5" stroke-linejoin="round" />
<text transform="translate(950.0,385.5) rotate(18) skewX(-14)" font-size="11" font-weight="bold" font-family="'Liberation Sans',sans-serif" fill="#cfcfcf" textLength="32" lengthAdjust="spacingAndGlyphs">Hako</text>
<ellipse cx="993.7" cy="301.1" rx="16.8" ry="5.8" transform="rotate(11 993.7 301.1)" fill="#222" stroke="#111" stroke-width="0.8"/>
<ellipse cx="994.3000000000001" cy="300.5" rx="10.5" ry="2.6" transform="rotate(11 993.7 301.1)" fill="#3a3a3a" stroke="#e8e8e8" stroke-width="0.9"/>
<polyline points="987.1,298.7 999.2,301.7" fill="none" stroke="#bbb" stroke-width="1.0" stroke-linejoin="round" stroke-linecap="round" />
<ellipse cx="1043.2" cy="283.7" rx="16.8" ry="5.8" fill="#4a4a4a" stroke="#111" stroke-width="0.8"/>
<ellipse cx="1043.2" cy="282.9" rx="13" ry="4.2" fill="#777" stroke="#222" stroke-width="0.6"/>
<path d="M1031.2,273.7 L1031.2,280.1 Q1043.2,285.7 1055.3,280.1 L1055.3,273.7 Q1043.2,267.0 1031.2,273.7Z" fill="#e8901c" stroke="#8a4a10" stroke-width="0.7"/>
<ellipse cx="1043.2" cy="273.7" rx="12" ry="4.4" fill="#f09a22"/>
<circle cx="1104.0" cy="410.8" r="1.1" fill="#111"/>
<circle cx="1112.4" cy="409.2" r="1.1" fill="#111"/>
<circle cx="1101.4" cy="423.7" r="1.1" fill="#111"/>
<circle cx="1102.4" cy="440.9" r="1.1" fill="#111"/>
<circle cx="1110.8" cy="438.7" r="1.1" fill="#111"/>
<circle cx="1072.9" cy="459.8" r="1.1" fill="#111"/>
<circle cx="1044.5" cy="466.4" r="1.1" fill="#111"/>
<circle cx="1011.2" cy="425.7" r="1.1" fill="#111"/>
<circle cx="942.0" cy="392.7" r="0.7" fill="#511"/>
<circle cx="947.0" cy="393.5" r="0.7" fill="#511"/>
<circle cx="955.1" cy="395.7" r="0.7" fill="#511"/>
</g>
<circle cx="1232.3" cy="250.6" r="10.8" fill="#fff" stroke="#111" stroke-width="1"/>
<text x="1232.3" y="254.5" font-size="10.6" text-anchor="middle" font-weight="normal" fill="#111" font-family="'Liberation Sans', sans-serif" >5</text>
<line x1="1225.8" y1="259.5" x2="1188.5" y2="313" stroke="#111" stroke-width="1.1" />
<polygon points="1187,315.5 1189.2,306.5 1193,309" fill="#111"/>
<g id="frame">
<polygon points="792.5,622.6 816.2,632.2 860.3,623.2 852.2,614.2 800.1,614.2" fill="#2a2c2e" stroke="#0c0d0e" stroke-width="0.7" stroke-linejoin="round" />
<polygon points="905.4,656.7 926.4,666.7 970.5,656.7 978.5,640.3 960.5,640.3" fill="#26282a" stroke="#0c0d0e" stroke-width="0.7" stroke-linejoin="round" />
<polygon points="932.4,653.9 964.5,646.7 970.5,652.3 937.4,660.3" fill="#1b1c1e" stroke="none" stroke-width="0" stroke-linejoin="round" />
<polygon points="937.4,654.7 952.5,651.3 953.1,652.7 938.0,656.3" fill="#fff" stroke="none" stroke-width="0" stroke-linejoin="round" />
<polygon points="940.4,658.3 957.5,654.3 958.1,655.7 941.0,659.9" fill="#fff" stroke="none" stroke-width="0" stroke-linejoin="round" />
<ellipse cx="962.1" cy="646.7" rx="2.6" ry="1.8" fill="#fff"/>
<ellipse cx="917.4" cy="656.7" rx="2.6" ry="1.6" fill="#fff"/>
<polygon points="748.4,671.3 754.0,696.0 776.1,702.4 817.2,692.4 825.2,676.3 786.1,680.4" fill="#26282a" stroke="#0c0d0e" stroke-width="0.7" stroke-linejoin="round" />
<polygon points="780.1,690.4 814.2,682.8 818.6,687.4 783.1,696.4" fill="#1b1c1e" stroke="none" stroke-width="0" stroke-linejoin="round" />
<polygon points="785.1,690.8 800.1,687.4 800.7,688.8 785.7,692.4" fill="#fff" stroke="none" stroke-width="0" stroke-linejoin="round" />
<polygon points="787.7,694.4 804.1,690.4 804.7,691.8 788.3,696.0" fill="#fff" stroke="none" stroke-width="0" stroke-linejoin="round" />
<ellipse cx="765.7" cy="687.4" rx="3.4" ry="4.6" fill="#fff" stroke="#0c0d0e" stroke-width="0.6"/>
<ellipse cx="809.8" cy="681.6" rx="2.8" ry="2" fill="#fff"/>
<polygon points="638.1,636.2 645.5,660.3 664.6,666.7 697.9,654.2 700.4,641.5 650.5,634.2" fill="#26282a" stroke="#0c0d0e" stroke-width="0.7" stroke-linejoin="round" />
<polygon points="667.6,656.7 697.9,648.6 700.4,654.2 671.4,663.0" fill="#1b1c1e" stroke="none" stroke-width="0" stroke-linejoin="round" />
<polygon points="671.4,656.2 685.2,652.6 685.7,654.2 671.9,657.7" fill="#fff" stroke="none" stroke-width="0" stroke-linejoin="round" />
<polygon points="673.9,659.7 689.0,655.7 689.5,657.2 674.4,661.2" fill="#fff" stroke="none" stroke-width="0" stroke-linejoin="round" />
<ellipse cx="654.9" cy="652.2" rx="3.6" ry="4.6" fill="#fff" stroke="#0c0d0e" stroke-width="0.6"/>
<polygon points="417.0,570.1 424.0,590.1 443.1,597.5 453.1,579.1 450.1,572.1" fill="#26282a" stroke="#0c0d0e" stroke-width="0.7" stroke-linejoin="round" />
<polygon points="443.1,597.5 453.1,580.1 480.6,582.7 477.3,588.5" fill="#232527" stroke="#0c0d0e" stroke-width="0.6" stroke-linejoin="round" />
<polygon points="453.1,585.1 468.1,582.9 468.5,584.5 453.7,586.9" fill="#fff" stroke="none" stroke-width="0" stroke-linejoin="round" />
<polygon points="451.1,591.1 470.1,587.7 470.5,589.3 451.7,592.9" fill="#fff" stroke="none" stroke-width="0" stroke-linejoin="round" />
<ellipse cx="433.7" cy="582.1" rx="3.6" ry="4.6" fill="#fff" stroke="#0c0d0e" stroke-width="0.6"/>
<polygon points="440.1,577.1 453.1,570.1 451.1,580.1 444.1,583.1" fill="#151617" stroke="#0c0d0e" stroke-width="0.5" stroke-linejoin="round" />
<polygon points="697.2,640.5 889.3,597.2 979.5,624.2 980.5,629.2 978.5,639.9 974.5,644.7 797.1,679.4 784.5,680.4 782.1,670.7 697.8,654.5" fill="#232527" stroke="#0c0d0e" stroke-width="0.8" stroke-linejoin="round" />
<polygon points="755.0,635.9 794.1,625.8 815.8,632.2 859.5,623.4 894.3,634.7 814.6,652.7" fill="#fff" stroke="#0c0d0e" stroke-width="0.7" stroke-linejoin="round" />
<polygon points="792.5,622.6 816.2,632.2 860.3,623.2 852.2,614.2 800.1,614.2" fill="#2a2c2e" stroke="#0c0d0e" stroke-width="0.7" stroke-linejoin="round" />
<polygon points="819.2,621.2 857.3,618.6 855.3,622.2 821.2,629.2" fill="#1b1c1e" stroke="none" stroke-width="0" stroke-linejoin="round" />
<polygon points="826.2,619.8 840.2,618.6 840.6,620.0 826.6,621.4" fill="#fff" stroke="none" stroke-width="0" stroke-linejoin="round" />
<polygon points="829.2,623.8 844.2,621.4 844.6,622.8 829.6,625.4" fill="#fff" stroke="none" stroke-width="0" stroke-linejoin="round" />
<polygon points="814.6,652.7 894.3,634.7 907.4,637.9 824.2,658.3" fill="#2c2e30" stroke="#0c0d0e" stroke-width="0.6" stroke-linejoin="round" />
<polygon points="848.2,614.2 860.3,611.2 937.4,635.3 912.4,637.3 894.3,634.7 859.5,623.4" fill="#2c2e30" stroke="#0c0d0e" stroke-width="0.6" stroke-linejoin="round" />
<polygon points="878.3,606.2 892.3,600.2 970.5,624.2 952.5,629.2" fill="#27292b" stroke="#0c0d0e" stroke-width="0.6" stroke-linejoin="round" />
<polygon points="740.0,638.3 755.0,635.9 814.6,652.7 824.2,658.3 797.1,669.3 783.1,670.3" fill="#2c2e30" stroke="#0c0d0e" stroke-width="0.6" stroke-linejoin="round" />
<polygon points="783.1,670.3 979.5,625.2 980.5,629.2 978.5,639.9 798.1,679.4 797.1,669.3" fill="#26282a" stroke="#0c0d0e" stroke-width="0.7" stroke-linejoin="round" />
<polygon points="783.1,670.3 797.1,669.3 798.1,679.4 784.5,680.4" fill="#6a6a6a" stroke="#0c0d0e" stroke-width="0.6" stroke-linejoin="round" />
<polygon points="697.2,640.5 783.1,670.3 784.5,680.4 697.8,654.5" fill="#232527" stroke="#0c0d0e" stroke-width="0.7" stroke-linejoin="round" />
<polyline points="889.3,597.2 979.5,624.2" fill="none" stroke="#0c0d0e" stroke-width="0.8" stroke-linejoin="round" stroke-linecap="round" />
<circle cx="761.0" cy="644.7" r="0.8" fill="#050505"/>
<circle cx="790.1" cy="653.3" r="0.8" fill="#050505"/>
<circle cx="816.2" cy="654.7" r="0.8" fill="#050505"/>
<circle cx="882.7" cy="647.5" r="0.8" fill="#050505"/>
<circle cx="937.4" cy="635.7" r="0.8" fill="#050505"/>
<circle cx="913.4" cy="624.6" r="0.8" fill="#050505"/>
<circle cx="885.3" cy="616.2" r="0.8" fill="#050505"/>
<circle cx="849.2" cy="608.2" r="0.8" fill="#050505"/>
<circle cx="787.1" cy="622.6" r="0.8" fill="#050505"/>
<circle cx="763.1" cy="669.3" r="0.8" fill="#050505"/>
<polygon points="417.6,518.6 437.1,523.0 437.1,565.9 450.1,572.1 417.0,570.1 416.9,563.4" fill="#1d1f21" stroke="#0c0d0e" stroke-width="0.8" stroke-linejoin="round" />
<polygon points="437,529 605.4,578.7 602.4,624.5 522.2,597.1 450.1,577.1 437.1,565.9" fill="#232527" stroke="#0c0d0e" stroke-width="0.6" stroke-linejoin="round" />
<polygon points="439.0,533.1 446.6,535.6 441.5,564.6 437.1,563.4" fill="#191b1c" stroke="none" stroke-width="0" stroke-linejoin="round" />
<polygon points="473.1,550.8 551.3,567.2 550.3,568.1 522.2,593.1 450.1,572.1 447.9,563.4" fill="#3c3e40" stroke="#0c0d0e" stroke-width="0.6" stroke-linejoin="round" />
<polygon points="478.8,563.1 509.7,557.1 511.0,559.0 482.6,565.3" fill="#dcdcdc" stroke="none" stroke-width="0" stroke-linejoin="round" />
<polygon points="534.3,563.4 548.8,567.2 536.2,569.7 531.2,565.9" fill="#dcdcdc" stroke="none" stroke-width="0" stroke-linejoin="round" />
<path d="M484.5,573.5 Q488.2,571.0 495.8,571.6 L509.7,570.7 L511.0,572.9 L494.6,575.4Z" fill="#e4e4e4"/>
<path d="M509.7,581.1 Q514.7,577.9 523.6,579.2 L526.1,581.7 Q517.3,583.6 509.7,581.1Z" fill="#1a1a1a"/>
<polygon points="522.3,573.5 531.2,572.2 532.2,577.9 523.3,579.2" fill="#9a9a9a" stroke="#222" stroke-width="0.6" stroke-linejoin="round" />
<polygon points="509.7,557.1 528.6,563.4 527.4,569.7 508.4,563.4" fill="#17181a" stroke="none" stroke-width="0" stroke-linejoin="round" />
<polygon points="452.3,547.2 472.5,552.7 471.6,567.2 451.0,560.2" fill="#8a8a8a" stroke="#222" stroke-width="0.6" stroke-linejoin="round" />
<polygon points="550.3,568.1 605.4,578.7 606,625 590.4,607.1 554.3,598.1" fill="#232628" stroke="#0c0d0e" stroke-width="0.6" stroke-linejoin="round" />
<polygon points="555.2,568.9 603,581.4 603,584 569.5,591.3 555.2,589.5" fill="#2e3133" stroke="#0c0d0e" stroke-width="0.5" stroke-linejoin="round" />
<polygon points="569.5,591.3 603,584 604.5,618 594,621 572,611" fill="#3b3e40" stroke="#0c0d0e" stroke-width="0.5" stroke-linejoin="round" />
<polygon points="605.4,578.7 700.5,607 698.2,643.5 700.4,641.5 650.5,634.2 638.1,636.2 606,625" fill="#1c1f20" stroke="#0c0d0e" stroke-width="0.8" stroke-linejoin="round" />
<polygon points="700.5,607 898,562 896,598.4 850.2,608.2 788.1,623.2 698.2,643.5" fill="#282a2c" stroke="#0c0d0e" stroke-width="0.8" stroke-linejoin="round" />
<polyline points="700.5,615 898,570" fill="none" stroke="#3a3d3f" stroke-width="1.4" stroke-linejoin="round" stroke-linecap="round" />
<rect x="-14.0" y="-6.5" width="28" height="13" rx="6.5" ry="6.5" transform="translate(761.3 610.2) rotate(-13) skewX(-10)" fill="#232527" stroke="#0c0d0e" stroke-width="1.3"/>
<rect x="-14.0" y="-6.5" width="28" height="13" rx="6.5" ry="6.5" transform="translate(800.2 601.6) rotate(-13) skewX(-10)" fill="#232527" stroke="#0c0d0e" stroke-width="1.3"/>
<rect x="-14.0" y="-6.5" width="28" height="13" rx="6.5" ry="6.5" transform="translate(838.1 592.8) rotate(-13) skewX(-10)" fill="#232527" stroke="#0c0d0e" stroke-width="1.3"/>
<rect x="-14.0" y="-6.5" width="28" height="13" rx="6.5" ry="6.5" transform="translate(876.5 583.9) rotate(-13) skewX(-10)" fill="#232527" stroke="#0c0d0e" stroke-width="1.3"/>
<rect x="-2.3" y="-7.0" width="4.6" height="14" rx="7.0" ry="7.0" transform="translate(734.8 620.1) rotate(0) skewX(0)" fill="#222426" stroke="#0c0d0e" stroke-width="0.9"/>
<polygon points="792.0,599.7 804.0,596.5 807.1,602.2 793.9,607.3" fill="#3a3d3f" stroke="none" stroke-width="0" stroke-linejoin="round" />
<polygon points="829.2,589.9 845.6,585.8 848.8,594.0 830.5,595.9" fill="#3a3d3f" stroke="none" stroke-width="0" stroke-linejoin="round" />
<polyline points="829.2,589.9 846.9,594.0" fill="none" stroke="#0c0d0e" stroke-width="0.6" stroke-linejoin="round" stroke-linecap="round" />
<polygon points="441,514 622,472 898,562 700.5,607 699.5,599.5" fill="#17191b" stroke="#0c0d0e" stroke-width="0.8" stroke-linejoin="round" />
<polygon points="451.0,515.0 620.0,477.0 641.9,483.9 471.9,521.8" fill="#2e3235" stroke="#0c0d0e" stroke-width="0.5" stroke-linejoin="round" />
<polygon points="475.3,522.9 645.5,485.0 667.4,491.9 496.1,529.6" fill="#2b2f32" stroke="#0c0d0e" stroke-width="0.5" stroke-linejoin="round" />
<polygon points="499.5,530.7 671.0,493.0 692.9,499.9 520.4,537.5" fill="#2e3235" stroke="#0c0d0e" stroke-width="0.5" stroke-linejoin="round" />
<polygon points="523.8,538.6 696.4,501.0 718.3,507.9 544.7,545.4" fill="#2b2f32" stroke="#0c0d0e" stroke-width="0.5" stroke-linejoin="round" />
<polygon points="548.1,546.5 721.9,509.0 743.8,515.9 569.0,553.2" fill="#2e3235" stroke="#0c0d0e" stroke-width="0.5" stroke-linejoin="round" />
<polygon points="572.3,554.3 747.4,517.0 769.3,523.9 593.2,561.1" fill="#2b2f32" stroke="#0c0d0e" stroke-width="0.5" stroke-linejoin="round" />
<polygon points="596.6,562.2 772.9,525.1 794.8,531.9 617.5,569.0" fill="#2e3235" stroke="#0c0d0e" stroke-width="0.5" stroke-linejoin="round" />
<polygon points="620.9,570.1 798.3,533.1 820.2,540.0 641.8,576.8" fill="#2b2f32" stroke="#0c0d0e" stroke-width="0.5" stroke-linejoin="round" />
<polygon points="645.2,577.9 823.8,541.1 845.7,548.0 666.0,584.7" fill="#2e3235" stroke="#0c0d0e" stroke-width="0.5" stroke-linejoin="round" />
<polygon points="669.4,585.8 849.3,549.1 871.2,556.0 690.3,592.5" fill="#2b2f32" stroke="#0c0d0e" stroke-width="0.5" stroke-linejoin="round" />
<polygon points="657.1,539.6 681.2,534.4 684.2,538.8 660.1,544.4" fill="#0b0c0d" stroke="none" stroke-width="0" stroke-linejoin="round" />
<polygon points="655.7,557.2 728.3,540.8 740.3,545.2 660.1,563.3" fill="#0b0c0d" stroke="none" stroke-width="0" stroke-linejoin="round" />
<polygon points="627.1,526.2 650.1,522.2 651.1,525.2 628.1,529.2" fill="#0b0c0d" stroke="none" stroke-width="0" stroke-linejoin="round" />
<polygon points="441,514 622,472 630,475.5 450,517.5" fill="#2c2f32" stroke="#0c0d0e" stroke-width="0.7" stroke-linejoin="round" />
<polygon points="622,472 898,562 889,561 616,476.5" fill="#272a2d" stroke="#0c0d0e" stroke-width="0.7" stroke-linejoin="round" />
<polygon points="441,514 699.5,599.5 703.5,596.5 449,513" fill="#2b2e31" stroke="#0c0d0e" stroke-width="0.7" stroke-linejoin="round" />
<polygon points="441,514 699.5,599.5 700.5,607 437,529" fill="#24272a" stroke="#0c0d0e" stroke-width="0.6" stroke-linejoin="round" />
<polygon points="700.5,607 898,562 892,558 702.5,601" fill="#2b2e31" stroke="#0c0d0e" stroke-width="0.7" stroke-linejoin="round" />
<polygon points="421.4,495.9 441.5,491.5 441.5,512.9 437.1,523.0 419.5,518.6" fill="#26282a" stroke="#0c0d0e" stroke-width="0.7" stroke-linejoin="round" />
<polygon points="421.4,495.9 433.3,499.7 437.1,523.0 419.5,518.6" fill="#1c1e20" stroke="none" stroke-width="0" stroke-linejoin="round" />
<polyline points="433.3,499.7 441.5,497.1" fill="none" stroke="#0c0d0e" stroke-width="0.5" stroke-linejoin="round" stroke-linecap="round" />
<polygon points="598.0,454.4 616.5,450.0 630.1,454.4 630.5,464.1 634.5,466.1 634.1,476.1 612.4,480.1 598.4,476.5" fill="#26282a" stroke="#0c0d0e" stroke-width="0.7" stroke-linejoin="round" />
<polygon points="598.0,454.4 616.5,450.0 630.1,454.4 612.4,459.0" fill="#2f3234" stroke="none" stroke-width="0" stroke-linejoin="round" />
<polygon points="612.4,459.0 630.1,454.4 630.5,464.1 634.5,466.1 634.1,476.1 612.4,480.1" fill="#1c1e20" stroke="none" stroke-width="0" stroke-linejoin="round" />
<polygon points="501.5,521.1 518.5,524.3 518.3,541.9 511.0,545.1 499.6,542.6" fill="#26282a" stroke="#0c0d0e" stroke-width="0.7" stroke-linejoin="round" />
<polygon points="512.2,514.2 517.3,515.2 514.1,523.0 510.3,522.4" fill="#c8c8c8" stroke="#222" stroke-width="0.5" stroke-linejoin="round" />
<polygon points="600.4,553.2 618.5,556.3 617.5,574.7 610.4,576.7 599.4,573.9" fill="#26282a" stroke="#0c0d0e" stroke-width="0.7" stroke-linejoin="round" />
<polygon points="610.4,546.2 614.9,545.8 613.4,555.3 610.0,554.7" fill="#c8c8c8" stroke="#222" stroke-width="0.5" stroke-linejoin="round" />
<polygon points="686.3,580.4 709.6,584.2 709.0,603.1 700.8,605.6 685.0,600.6" fill="#26282a" stroke="#0c0d0e" stroke-width="0.7" stroke-linejoin="round" />
<polygon points="686.3,580.4 709.6,584.2 702.0,588.0 685.6,582.3" fill="#3a3d3f" stroke="none" stroke-width="0" stroke-linejoin="round" />
<polygon points="702.0,588.0 709.6,584.2 709.0,603.1 700.8,605.6" fill="#333537" stroke="none" stroke-width="0" stroke-linejoin="round" />
<polygon points="687.8,479.1 707.2,482.1 705.2,499.1 698.2,502.1 686.6,498.7" fill="#26282a" stroke="#0c0d0e" stroke-width="0.7" stroke-linejoin="round" />
<polygon points="693.2,472.1 698.2,473.1 697.2,483.1 692.6,482.1" fill="#c8c8c8" stroke="#222" stroke-width="0.5" stroke-linejoin="round" />
<polygon points="787.6,508.8 796.4,512.0 807.1,510.1 805.9,529.7 795.8,533.4 786.3,530.3" fill="#26282a" stroke="#0c0d0e" stroke-width="0.7" stroke-linejoin="round" />
<polygon points="793.3,503.2 798.3,503.8 795.8,512.6 792.0,512.0" fill="#c8c8c8" stroke="#222" stroke-width="0.5" stroke-linejoin="round" />
<polygon points="881.6,539.8 898.6,544.2 898.0,561.8 889.8,564.4 881.0,555.5" fill="#26282a" stroke="#0c0d0e" stroke-width="0.7" stroke-linejoin="round" />
<polygon points="891.1,546.7 898.6,544.2 898.0,561.8 889.8,564.4" fill="#1c1e20" stroke="none" stroke-width="0" stroke-linejoin="round" />
</g>
<circle cx="1088.5" cy="727.5" r="10.8" fill="#fff" stroke="#111" stroke-width="1"/>
<text x="1088.5" y="731.5" font-size="10.6" text-anchor="middle" font-weight="normal" fill="#111" font-family="'Liberation Sans', sans-serif" >1</text>
<line x1="1078" y1="724.5" x2="892" y2="662.2" stroke="#111" stroke-width="1.1" />
<polygon points="889,661.2 898,661.2 896.8,665.2" fill="#111"/>
<g id="box3">
<polygon points="219.6,583.0 318.5,559.8 421.8,595.8 322.9,618.6" fill="#3d3f3f" stroke="#0c0c0c" stroke-width="1.1" stroke-linejoin="round" />
<polygon points="322.9,618.6 421.8,595.8 420.9,625.7 321.2,647.6" fill="#404242" stroke="#0c0c0c" stroke-width="1.1" stroke-linejoin="round" />
<polygon points="219.6,583.0 322.9,618.6 321.2,647.6 216.9,615.0" fill="#262727" stroke="#0c0c0c" stroke-width="1.1" stroke-linejoin="round" />
<polygon points="221.4,588.3 229.4,590.6 228.5,614.1 219.6,611.5" fill="#1a1a1a" stroke="#0a0a0a" stroke-width="0.6" stroke-linejoin="round" />
<polygon points="308.3,618.6 316.7,620.9 315.5,642.7 306.9,640.0" fill="#1a1a1a" stroke="#0a0a0a" stroke-width="0.6" stroke-linejoin="round" />
<polyline points="218.7,603.5 321.2,633.7" fill="none" stroke="#0a0a0a" stroke-width="1" stroke-linejoin="round" stroke-linecap="round" />
<polygon points="233.0,601.7 242.8,604.3 242.4,607.9 232.6,605.6" fill="#8a4a44" stroke="none" stroke-width="0" stroke-linejoin="round" />
<polygon points="233.0,609.7 243.7,612.7 243.3,620.4 232.6,617.3" fill="#8a8a8a" stroke="#111" stroke-width="0.5" stroke-linejoin="round" />
<polygon points="257.0,607.9 281.1,615.0 280.2,631.1 256.7,624.5" fill="none" stroke="#0a0a0a" stroke-width="1.4" stroke-linejoin="round" />
<polygon points="260.6,610.6 278.4,615.9 278.0,618.6 260.6,613.6" fill="#9a9a9a" stroke="none" stroke-width="0" stroke-linejoin="round" />
<polygon points="259.7,624.8 273.9,628.8 273.9,630.5 259.7,626.6" fill="#9a9a9a" stroke="none" stroke-width="0" stroke-linejoin="round" />
<circle cx="223.2" cy="591.9" r="1.7" fill="#0a0a0a"/>
<circle cx="222.8" cy="599.0" r="1.7" fill="#0a0a0a"/>
<circle cx="222.3" cy="608.8" r="1.7" fill="#0a0a0a"/>
<circle cx="217.5" cy="591.9" r="1.7" fill="#0a0a0a"/>
<circle cx="216.9" cy="609.7" r="1.7" fill="#0a0a0a"/>
<circle cx="244.5" cy="596.7" r="1.7" fill="#0a0a0a"/>
<circle cx="247.8" cy="600.8" r="1.7" fill="#0a0a0a"/>
<circle cx="242.8" cy="601.7" r="1.7" fill="#0a0a0a"/>
<circle cx="267.7" cy="606.7" r="1.7" fill="#0a0a0a"/>
<circle cx="272.2" cy="608.1" r="1.7" fill="#0a0a0a"/>
<circle cx="289.1" cy="613.3" r="1.7" fill="#0a0a0a"/>
<circle cx="293.5" cy="614.5" r="1.7" fill="#0a0a0a"/>
<circle cx="298.0" cy="615.9" r="1.7" fill="#0a0a0a"/>
<circle cx="302.4" cy="617.2" r="1.7" fill="#0a0a0a"/>
<circle cx="310.5" cy="622.2" r="1.7" fill="#0a0a0a"/>
<circle cx="309.6" cy="637.3" r="1.7" fill="#0a0a0a"/>
<circle cx="422.7" cy="599.9" r="1.7" fill="#0a0a0a"/>
<circle cx="421.8" cy="617.7" r="1.7" fill="#0a0a0a"/>
<circle cx="244.7" cy="598.8" r="4.2" fill="#0c0c0c"/>
<circle cx="267.9" cy="607.7" r="2.8" fill="#0c0c0c"/>
<circle cx="274.2" cy="608.6" r="2.8" fill="#0c0c0c"/>
<circle cx="290.3" cy="614" r="2.6" fill="#0c0c0c"/>
<circle cx="296.5" cy="615.8" r="2.6" fill="#0c0c0c"/>
<circle cx="302.8" cy="617.6" r="2.6" fill="#0c0c0c"/>
<circle cx="308.1" cy="619.8" r="2.6" fill="#0c0c0c"/>
<circle cx="217.9" cy="592.5" r="2.4" fill="#0c0c0c"/>
<circle cx="217" cy="609.5" r="2.4" fill="#0c0c0c"/>
<circle cx="224.1" cy="594.3" r="2.8" fill="#0c0c0c"/>
<circle cx="224.1" cy="608.6" r="2.8" fill="#0c0c0c"/>
</g>
<g id="plate3">
<polygon points="126.3,602.9 296.6,656.4 295.3,690.8 124.9,637.2" fill="#1d2021" stroke="#0a0a0a" stroke-width="0.9" stroke-linejoin="round" />
<polygon points="293.1,655.6 296.6,656.4 295.3,690.8 292.0,689.7" fill="#2e3032" stroke="none" stroke-width="0" stroke-linejoin="round" />
<polygon points="201.8,631.1 217.8,635.5 217.8,640.9 201.8,636.4" fill="#fff" stroke="#0a0a0a" stroke-width="0.7" stroke-linejoin="round" />
<rect x="134.8" y="637.1" width="1.2" height="3.5" fill="#0a0a0a"/>
<rect x="140.3" y="638.4" width="1.2" height="3.5" fill="#0a0a0a"/>
<rect x="274.09999999999997" y="679.7" width="1.2" height="3.5" fill="#0a0a0a"/>
<rect x="279.59999999999997" y="681.0" width="1.2" height="3.5" fill="#0a0a0a"/>
</g>
<circle cx="97.5" cy="486.3" r="10.8" fill="#fff" stroke="#111" stroke-width="1"/>
<text x="97.5" y="490.3" font-size="10.6" text-anchor="middle" font-weight="normal" fill="#111" font-family="'Liberation Sans', sans-serif" >3</text>
<line x1="106.3" y1="492.8" x2="243.5" y2="594" stroke="#111" stroke-width="1.1" />
<polygon points="246.5,596.3 237.8,593.2 240.4,589.8" fill="#111"/>
<defs>
<linearGradient id="gReel" x1="0" y1="0" x2="1" y2="0"><stop offset="0" stop-color="#9a9a9a"/><stop offset="0.25" stop-color="#c4c4c4"/><stop offset="0.6" stop-color="#9a9a9a"/><stop offset="1" stop-color="#777"/></linearGradient>
<linearGradient id="gPl" x1="0" y1="0" x2="1" y2="1"><stop offset="0" stop-color="#8f8f8f"/><stop offset="1" stop-color="#7c7c7c"/></linearGradient>
</defs>
<g id="reel">
<ellipse cx="551.3" cy="651.2" rx="45" ry="59.5" fill="url(#gReel)" stroke="#111" stroke-width="1" transform="rotate(4 550.3 651.2)"/>
<ellipse cx="554.3" cy="650.2" rx="38" ry="53" fill="#8a8a8a" stroke="#222" stroke-width="0.8" transform="rotate(4 550.3 651.2)"/>
<ellipse cx="552.3" cy="651.2" rx="31" ry="46" fill="#a6a6a6" stroke="#333" stroke-width="0.7" transform="rotate(4 550.3 651.2)"/>
<path d="M518.8,603.3 Q497.6,639.3 514.0,677.2" fill="none" stroke="#111" stroke-width="2.2"/>
<polyline points="506.2,636.2 518.2,640.2" fill="none" stroke="#333" stroke-width="1.2" stroke-linejoin="round" stroke-linecap="round" />
<polyline points="564.3,648.2 576.4,644.2" fill="none" stroke="#333" stroke-width="1.2" stroke-linejoin="round" stroke-linecap="round" />
<polyline points="564.3,668.3 580.4,684.3" fill="none" stroke="#333" stroke-width="1.2" stroke-linejoin="round" stroke-linecap="round" />
<path d="M570.4,624.2 Q591.4,652.2 564.3,698.3" fill="none" stroke="#111" stroke-width="1"/>
<path d="M577.4,624.2 Q600.4,654.3 572.4,700.4" fill="none" stroke="#111" stroke-width="1"/>
<polygon points="560.3,698.3 580.4,693.3 579.4,705.4 553.3,710.4" fill="#c4c4c4" stroke="#111" stroke-width="0.8" stroke-linejoin="round" />
<polygon points="564.3,702.0 576.4,698.7 576.0,702.8 562.3,705.6" fill="#f4f4f4" stroke="none" stroke-width="0" stroke-linejoin="round" />
<polygon points="520.2,591.7 559.3,603.1 562.7,626.2 560.3,700.4 553.3,710.4 512.2,696.3 518.2,606.1" fill="url(#gPl)" stroke="#111" stroke-width="1" stroke-linejoin="round" />
<ellipse cx="538.3" cy="651.2" rx="11.5" ry="14.5" fill="#8a8a8a" stroke="#111" stroke-width="0.8"/>
<circle cx="538.3" cy="651.2" r="3.6" fill="#111"/>
<circle cx="546.9" cy="633.2" r="1.4" fill="#111"/>
<circle cx="530.9" cy="671.3" r="1.4" fill="#111"/>
<circle cx="519.8" cy="606.1" r="1.4" fill="#111"/>
<circle cx="515.2" cy="674.7" r="1.4" fill="#111"/>
<circle cx="514.2" cy="694.3" r="1.4" fill="#111"/>
<circle cx="518.2" cy="700.4" r="1.4" fill="#111"/>
<circle cx="544.3" cy="707.4" r="1.4" fill="#111"/>
<circle cx="552.7" cy="710.4" r="1.4" fill="#111"/>
<circle cx="558.7" cy="625.8" r="1.4" fill="#111"/>
<polygon points="559.3,603.1 576.4,599.1 595.4,604.1 599.4,609.2 598.4,618.2 590.4,621.2 576.4,619.2 563.3,626.2" fill="#8a8a8a" stroke="#111" stroke-width="0.9" stroke-linejoin="round" />
<polygon points="559.3,603.1 576.4,599.1 577.4,618.2 563.3,626.2" fill="#7a7a7a" stroke="#111" stroke-width="0.7" stroke-linejoin="round" />
<polygon points="580.4,606.1 591.4,603.1 597.4,609.2 596.4,619.2 586.4,621.2" fill="#b5b5b5" stroke="#111" stroke-width="0.7" stroke-linejoin="round" />
<polyline points="522.2,592.5 542.3,586.1 570.4,592.5 580.4,598.1" fill="none" stroke="#111" stroke-width="0.9" stroke-linejoin="round" stroke-linecap="round" />
<polygon points="522.2,592.5 542.3,586.1 570.4,592.5 559.3,603.1" fill="#55585a" stroke="#111" stroke-width="0.7" stroke-linejoin="round" />
<polyline points="530.3,591.7 543.3,588.1 564.3,594.5" fill="none" stroke="#b8b8b8" stroke-width="0.9" stroke-linejoin="round" stroke-linecap="round" />
</g>
<circle cx="527.5" cy="810" r="10.8" fill="#fff" stroke="#111" stroke-width="1"/>
<text x="527.5" y="814.0" font-size="10.6" text-anchor="middle" font-weight="normal" fill="#111" font-family="'Liberation Sans', sans-serif" >4</text>
<line x1="531" y1="799.8" x2="550.5" y2="715" stroke="#111" stroke-width="1.1" />
<polygon points="551.3,711 552.2,720 548.2,719.2" fill="#111"/>
<rect x="0" y="954" width="1347" height="4" fill="#ababab"/>
<rect x="0" y="958" width="1347" height="27" fill="#f0f0f0"/>
<g fill="#b5b5b5"><polygon points="483,966.7 483,980 476.5,973.3"/><polygon points="485.3,966.7 485.3,980 483.2,976.5 483.2,970.2"/><rect x="486.6" y="967.5" width="1.6" height="12"/></g>
<polygon points="510.8,966.7 510.8,980 502,973.3" fill="#b5b5b5"/>
<rect x="522.5" y="963.5" width="114" height="19" fill="#fff" stroke="#b9b9b9" stroke-width="1" shape-rendering="crispEdges"/>
<text x="527" y="978.2" font-size="12" text-anchor="start" font-weight="normal" fill="#111" font-family="'DejaVu Sans', sans-serif" textLength="32.8" lengthAdjust="spacingAndGlyphs" >1 / 24</text>
<polygon points="627,972 632,972 629.5,974.8" fill="#222"/>
<polygon points="645.8,966.7 645.8,980 654,973.3" fill="#111"/>
<g fill="#111"><rect x="668.5" y="967.2" width="2.2" height="12.4"/><polygon points="672.3,966.7 672.3,980 681.4,973.3"/></g>
<g fill="none" stroke="#b3bcc4" stroke-width="1.3"><rect x="693.1" y="966.5" width="9" height="8" fill="#f0f0f0"/><rect x="698.6" y="972" width="10" height="9" fill="#f0f0f0"/></g>
<path d="M696.6 970.5h7m-2.2-2.2l2.2 2.2l-2.2 2.2" stroke="#9fb3b8" stroke-width="1.2" fill="none"/>
<g fill="none" stroke="#b3bcc4" stroke-width="1.3"><rect x="719.3" y="966.5" width="9" height="8" fill="#f0f0f0"/><rect x="724.8" y="972" width="10" height="9" fill="#f0f0f0"/></g>
<path d="M722.8 970.5h7m-2.2-2.2l2.2 2.2l-2.2 2.2" stroke="#9fb3b8" stroke-width="1.2" fill="none"/>
<rect x="1280" y="965" width="23" height="18" fill="#c3d5f0"/>
<g fill="#fff" stroke="#6c6c6c" stroke-width="1.2">
<rect x="1286" y="967.6" width="9.6" height="12.8"/>
<rect x="1310.4" y="966.6" width="10" height="9"/>
<rect x="1310.4" y="977.8" width="10" height="6"/>
<rect x="1335.4" y="967.6" width="6" height="12"/>
<rect x="1343.4" y="967.6" width="6" height="12"/>
</g>
<g stroke="#b29a88" stroke-width="0.9">
<line x1="1287.8" y1="970.8" x2="1293.8" y2="970.8"/>
<line x1="1287.8" y1="973.4" x2="1293.8" y2="973.4"/>
<line x1="1287.8" y1="976" x2="1293.8" y2="976"/>
<line x1="1312.4" y1="969.4" x2="1318.4" y2="969.4"/>
<line x1="1312.4" y1="971.8" x2="1318.4" y2="971.8"/>
<line x1="1312.4" y1="980.2" x2="1318.4" y2="980.2"/>
<line x1="1336.8" y1="970.6" x2="1340" y2="970.6"/>
<line x1="1344.8" y1="970.6" x2="1347" y2="970.6"/>
<line x1="1336.8" y1="973.4" x2="1340" y2="973.4"/>
<line x1="1344.8" y1="973.4" x2="1347" y2="973.4"/>
<line x1="1336.8" y1="976.2" x2="1340" y2="976.2"/>
<line x1="1344.8" y1="976.2" x2="1347" y2="976.2"/>
</g>
</svg>
</body></html>
